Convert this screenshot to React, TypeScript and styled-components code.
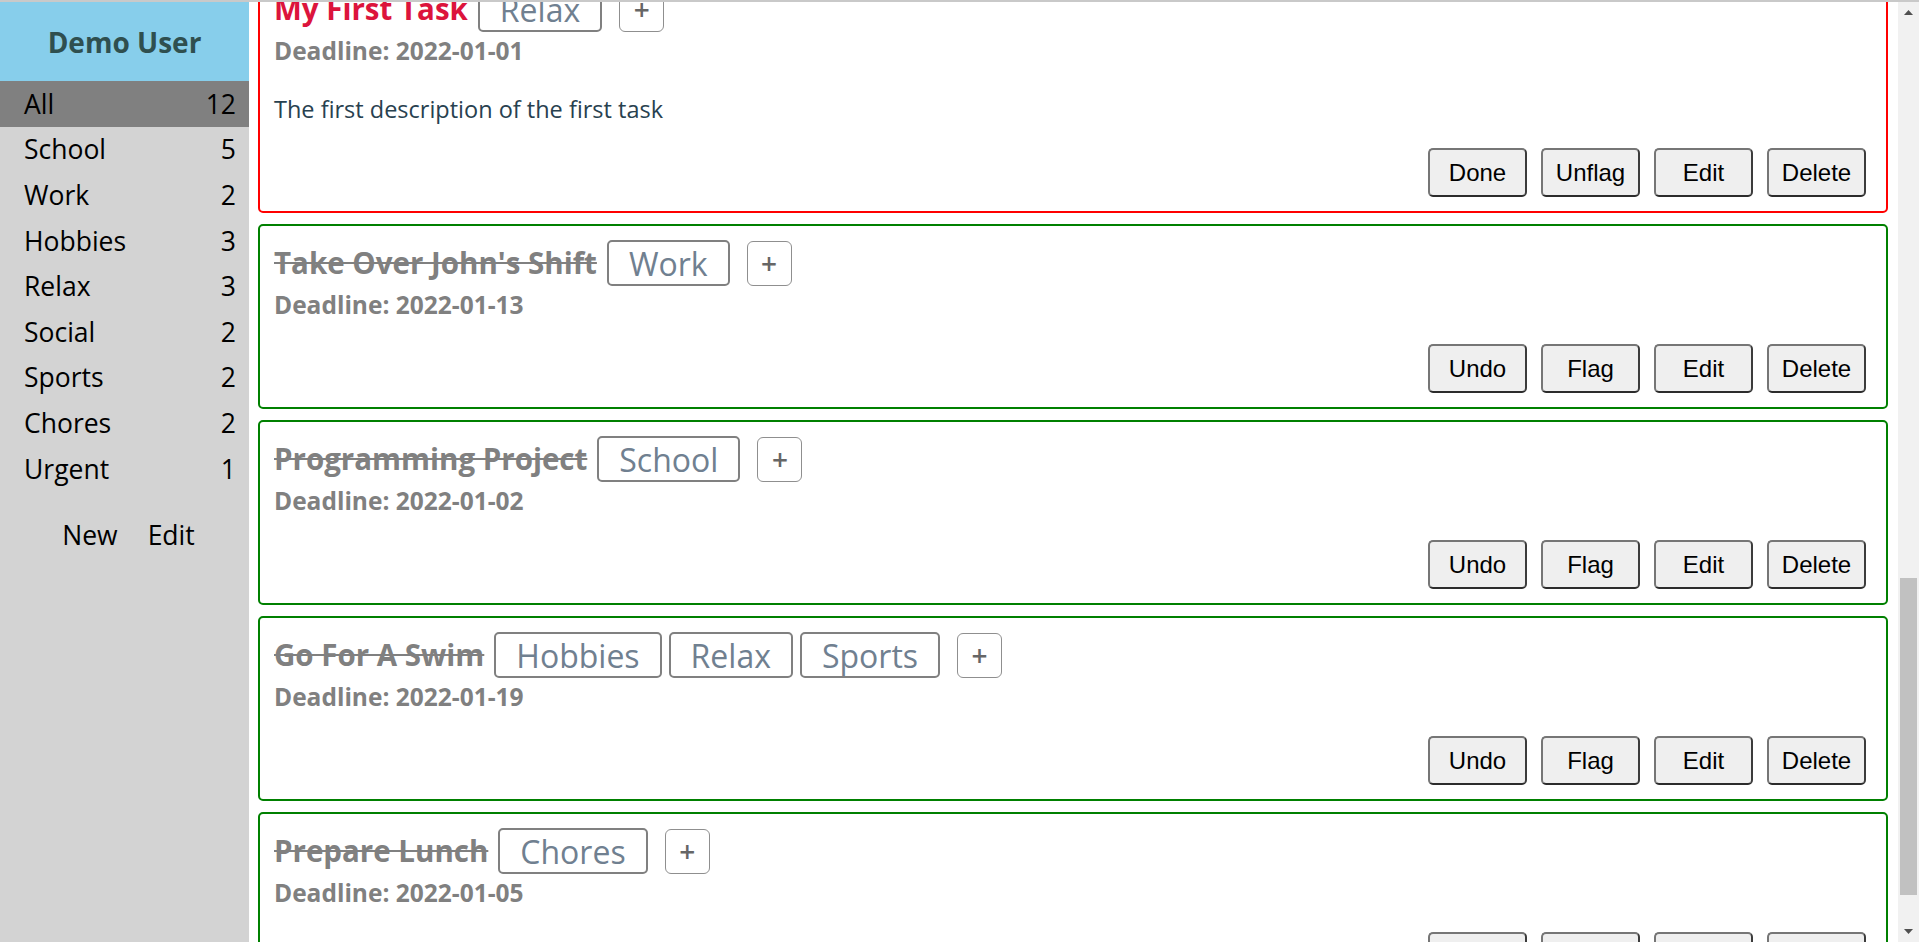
import React, { useLayoutEffect, useRef, useState } from "react";
import styled, { createGlobalStyle } from "styled-components";

type TaskState = "flagged" | "done" | "open";

interface Task {
  title: string;
  deadline: string;
  tags: string[];
  state: TaskState;
  description?: string;
}

const categories: [string, number][] = [
  ["All", 12],
  ["School", 5],
  ["Work", 2],
  ["Hobbies", 3],
  ["Relax", 3],
  ["Social", 2],
  ["Sports", 2],
  ["Chores", 2],
  ["Urgent", 1],
];

const tasks: Task[] = [
  { title: "Essay Draft", deadline: "2022-01-03", tags: ["School", "Urgent"], state: "flagged", description: "Outline and first two sections" },
  { title: "Group Study Session", deadline: "2022-01-06", tags: ["School", "Social"], state: "open" },
  { title: "Lab Report", deadline: "2022-01-08", tags: ["School"], state: "open", description: "Write up the results of the titration" },
  { title: "Client Presentation", deadline: "2022-01-10", tags: ["Work"], state: "open" },
  { title: "Paint Landscape", deadline: "2022-01-15", tags: ["Hobbies", "Relax"], state: "open", description: "Try the new watercolours" },
  { title: "Basketball Game", deadline: "2022-01-16", tags: ["Sports", "Social", "Hobbies"], state: "open" },
  { title: "Organize Study Desk", deadline: "2022-01-04", tags: ["School", "Chores"], state: "open", description: "Sort the notes by subject" },
  { title: "My First Task", deadline: "2022-01-01", tags: ["Relax"], state: "flagged", description: "The first description of the first task" },
  { title: "Take Over John's Shift", deadline: "2022-01-13", tags: ["Work"], state: "done" },
  { title: "Programming Project", deadline: "2022-01-02", tags: ["School"], state: "done" },
  { title: "Go For A Swim", deadline: "2022-01-19", tags: ["Hobbies", "Relax", "Sports"], state: "done" },
  { title: "Prepare Lunch", deadline: "2022-01-05", tags: ["Chores"], state: "done" },
];

const ANCHOR = "My First Task";

const GlobalStyle = createGlobalStyle`
  html, body {
    margin: 0;
    padding: 0;
    height: 100%;
    overflow: hidden;
  }
  body {
    font-family: "Open Sans", "Noto Sans", sans-serif;
    background: #fff;
  }
  #root {
    height: 100%;
  }
`;

const Shell = styled.div`
  display: flex;
  height: 100vh;
  box-sizing: border-box;
  border-top: 2px solid #c9c9c9;
`;

const Sidebar = styled.aside`
  width: 249px;
  flex: none;
  display: flex;
  flex-direction: column;
  background: #d3d3d3;
`;

const UserHeader = styled.div`
  height: 79px;
  display: flex;
  align-items: center;
  justify-content: center;
  background: #87ceeb;
  color: #2f4f4f;
  font-size: 28px;
  font-weight: 700;
`;

const CategoryRow = styled.div<{ $active?: boolean }>`
  height: 45.6px;
  display: flex;
  align-items: center;
  justify-content: space-between;
  padding: 0 13px 0 24px;
  background: ${(p) => (p.$active ? "#808080" : "transparent")};
  color: #000;
  font-size: 26.5px;
`;

const SideActions = styled.div`
  height: 45.6px;
  margin-top: 21px;
  padding-left: 8px;
  display: flex;
  align-items: center;
  justify-content: center;
  gap: 30px;
  font-size: 26.5px;
  color: #000;
`;

const Main = styled.main`
  flex: 1;
  overflow-y: scroll;
  scrollbar-width: none;
`;

const ScrollRail = styled.div`
  width: 21px;
  flex: none;
  display: flex;
  flex-direction: column;
  background: #f1f1f1;
`;

const RailArrow = styled.div`
  height: 21px;
  flex: none;
  display: flex;
  align-items: center;
  justify-content: center;
`;

const RailTrack = styled.div`
  flex: 1;
  display: flex;
  flex-direction: column;
`;

const RailThumb = styled.div`
  margin: 0 2px;
  background: #c1c1c1;
`;

const TaskList = styled.div`
  display: flex;
  flex-direction: column;
  gap: 11px;
  padding: 10px 10px 23px 9px;
`;

const borderColors: Record<TaskState, string> = {
  flagged: "#ff0000",
  done: "#008000",
  open: "#4682b4",
};

const Card = styled.section<{ $state: TaskState }>`
  display: flex;
  flex-direction: column;
  border: 2px solid ${(p) => borderColors[p.$state]};
  border-radius: 5px;
  padding: 14px 20px 14px 14px;
`;

const TitleRow = styled.div`
  display: flex;
  align-items: center;
`;

const Title = styled.h2<{ $state: TaskState }>`
  margin: 0 10px 0 0;
  font-size: 29.5px;
  font-weight: 700;
  line-height: 36px;
  color: ${(p) => (p.$state === "flagged" ? "#dc143c" : p.$state === "done" ? "#808080" : "#2f4f4f")};
  text-decoration: ${(p) => (p.$state === "done" ? "line-through" : "none")};
`;

const Tag = styled.span`
  height: 46px;
  box-sizing: border-box;
  display: inline-flex;
  align-items: center;
  padding: 0 20px;
  margin-right: 7px;
  border: 2px solid #808080;
  border-radius: 5px;
  color: #708090;
  font-size: 32px;
`;

const AddTag = styled.span`
  width: 45px;
  height: 45px;
  box-sizing: border-box;
  display: inline-flex;
  align-items: center;
  justify-content: center;
  margin-left: 10px;
  border: 1px solid #8f8f8f;
  border-radius: 6px;
  color: #666;
  font-size: 28px;
  font-weight: 600;
`;

const Deadline = styled.div`
  margin-top: 3px;
  line-height: 32px;
  font-size: 24.5px;
  font-weight: 700;
  color: #808080;
`;

const Description = styled.p`
  margin: 26px 0 0;
  line-height: 32px;
  font-size: 23.5px;
  color: #28414f;
`;

const Actions = styled.div`
  margin-top: 23px;
  display: flex;
  justify-content: flex-end;
  gap: 14px;
`;

const ActionButton = styled.button`
  width: 99px;
  height: 49px;
  padding: 0;
  background: #efefef;
  border: 2px solid;
  border-color: #767676 #3c3c3c #2c2c2c #767676;
  border-radius: 5px;
  color: #000;
  font-family: "Liberation Sans", Arial, sans-serif;
  font-size: 24px;
`;

function TaskCard({ task, cardRef }: { task: Task; cardRef?: React.Ref<HTMLElement> }) {
  const done = task.state === "done";
  return (
    <Card $state={task.state} ref={cardRef}>
      <TitleRow>
        <Title $state={task.state}>{task.title}</Title>
        {task.tags.map((tag) => (
          <Tag key={tag}>{tag}</Tag>
        ))}
        <AddTag>+</AddTag>
      </TitleRow>
      <Deadline>Deadline: {task.deadline}</Deadline>
      {task.description && <Description>{task.description}</Description>}
      <Actions>
        <ActionButton>{done ? "Undo" : "Done"}</ActionButton>
        <ActionButton>{task.state === "flagged" ? "Unflag" : "Flag"}</ActionButton>
        <ActionButton>Edit</ActionButton>
        <ActionButton>Delete</ActionButton>
      </Actions>
    </Card>
  );
}

function Arrow({ up }: { up?: boolean }) {
  return (
    <RailArrow>
      <svg width="9" height="5" viewBox="0 0 9 5">
        <path d={up ? "M0 5 L4.5 0 L9 5 Z" : "M0 0 L4.5 5 L9 0 Z"} fill="#505050" />
      </svg>
    </RailArrow>
  );
}

export default function App() {
  const mainRef = useRef<HTMLElement>(null);
  const anchorRef = useRef<HTMLElement>(null);
  const trackRef = useRef<HTMLDivElement>(null);
  const [thumb, setThumb] = useState({ top: 0, height: 0 });

  // scroll the list so the first task's card ends at y=213, then size the thumb
  useLayoutEffect(() => {
    const main = mainRef.current;
    const card = anchorRef.current;
    const track = trackRef.current;
    if (!main || !card || !track) return;
    main.scrollTop += card.getBoundingClientRect().bottom - 213;
    const h = track.clientHeight;
    setThumb({
      top: (main.scrollTop / main.scrollHeight) * h,
      height: (main.clientHeight / main.scrollHeight) * h,
    });
  }, []);

  return (
    <>
      <GlobalStyle />
      <Shell>
        <Sidebar>
          <UserHeader>Demo User</UserHeader>
          {categories.map(([name, count], i) => (
            <CategoryRow key={name} $active={i === 0}>
              <span>{name}</span>
              <span>{count}</span>
            </CategoryRow>
          ))}
          <SideActions>
            <span>New</span>
            <span>Edit</span>
          </SideActions>
        </Sidebar>
        <Main ref={mainRef}>
          <TaskList>
            {tasks.map((task) => (
              <TaskCard
                key={task.title}
                task={task}
                cardRef={task.title === ANCHOR ? anchorRef : undefined}
              />
            ))}
          </TaskList>
        </Main>
        <ScrollRail>
          <Arrow up />
          <RailTrack ref={trackRef}>
            <RailThumb style={{ marginTop: thumb.top, height: thumb.height }} />
          </RailTrack>
          <Arrow />
        </ScrollRail>
      </Shell>
    </>
  );
}
